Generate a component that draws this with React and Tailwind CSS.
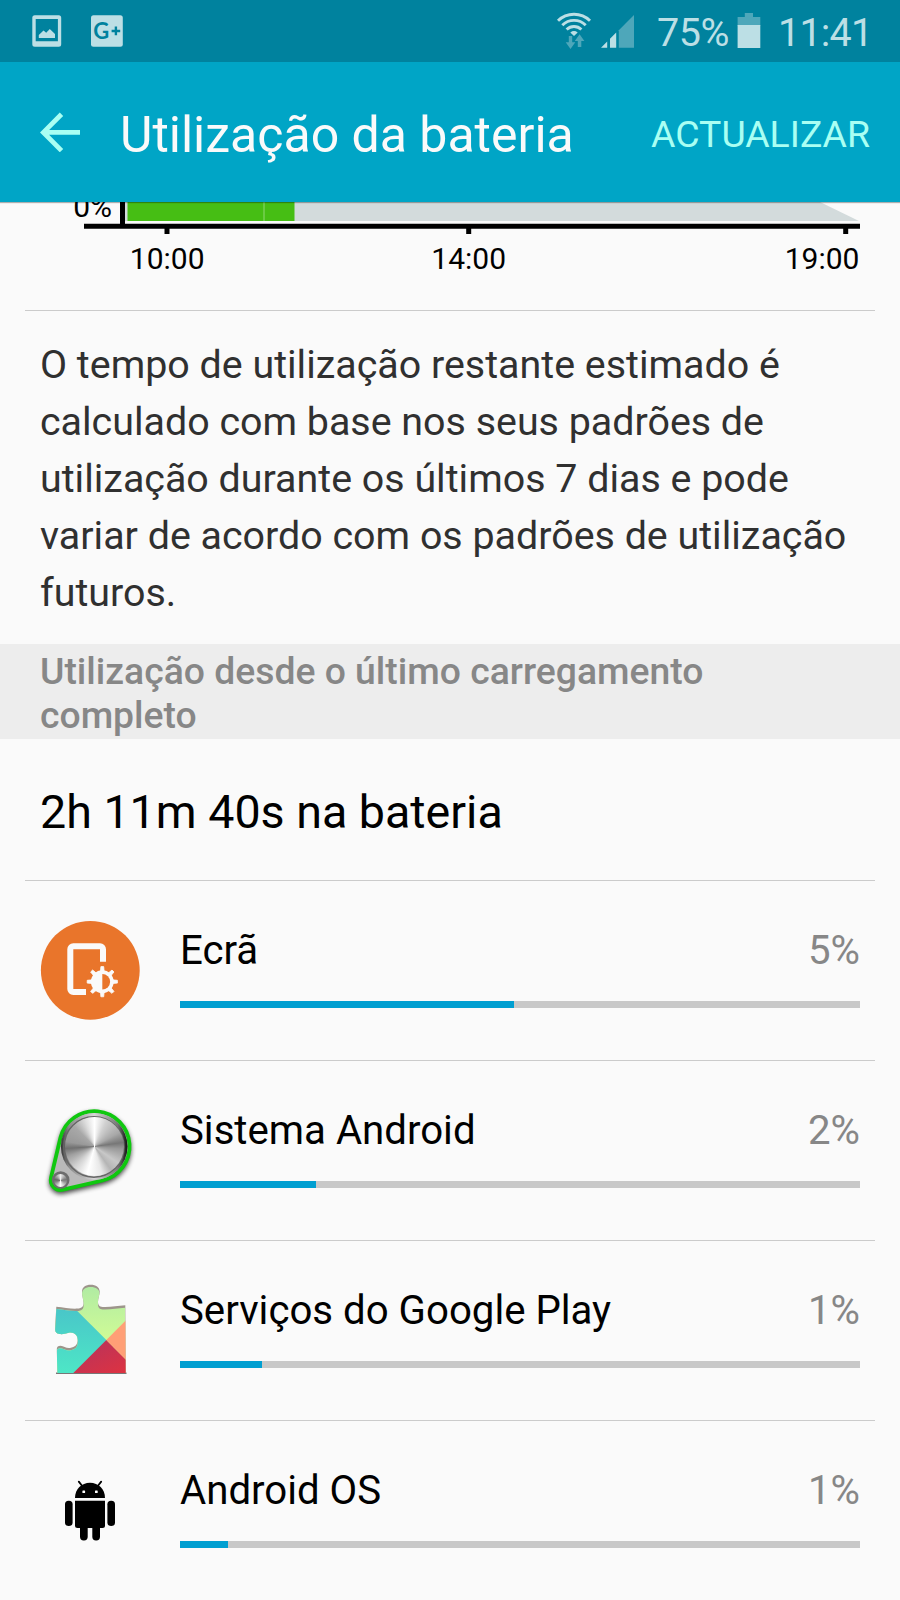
import clsx from 'clsx'

const apps = [
  { name: 'Ecrã', percent: '5%', fill: 49.1, Icon: ScreenIcon },
  { name: 'Sistema Android', percent: '2%', fill: 20, Icon: KnobIcon },
  { name: 'Serviços do Google Play', percent: '1%', fill: 12.1, Icon: PuzzleIcon },
  { name: 'Android OS', percent: '1%', fill: 7.1, Icon: RobotIcon },
]

function ScreenIcon() {
  const teeth = [0, 45, 90, 135, 180, 225, 270, 315]
  return (
    <svg className="size-[100px]" viewBox="0 0 100 100">
      <circle cx="50.3" cy="50.3" r="49.4" fill="#e9752b" />
      <path
        d="M63 41.7V29.3a3 3 0 0 0-3-3H33.3a3 3 0 0 0-3 3V69a3 3 0 0 0 3 3H46"
        fill="none"
        stroke="#fafafa"
        strokeWidth="6"
      />
      <circle cx="62.3" cy="61.7" r="15.5" fill="#e9752b" />
      {teeth.map((a) => (
        <path
          key={a}
          d="M60.4 52L60.9 46.6H63.7L64.2 52Z"
          fill="#fafafa"
          stroke="#fafafa"
          strokeWidth="0.8"
          transform={`rotate(${a} 62.3 61.7)`}
        />
      ))}
      <circle cx="62.3" cy="61.7" r="11.4" fill="#fafafa" />
      <path d="M62.3 53.9a7.8 7.8 0 0 1 0 15.6Z" fill="#e9752b" />
    </svg>
  )
}

function KnobIcon() {
  const belt = 'M11 77.6L20.5 37.5A35.1 35.1 0 1 1 62.5 80.5L23.1 89.7A10 10 0 0 1 11 77.6Z'
  return (
    <div className="relative size-[100px]">
      <svg className="absolute inset-0 size-full overflow-visible" viewBox="0 0 100 100">
        <defs>
          <filter id="knobShadow" x="-20%" y="-20%" width="140%" height="140%">
            <feGaussianBlur stdDeviation="2.6" />
          </filter>
          <linearGradient id="knobRim" x1="0" x2="1">
            <stop offset="0" stopColor="#333" />
            <stop offset="0.12" stopColor="#8a8a8a" />
            <stop offset="0.5" stopColor="#d6d6d6" />
            <stop offset="0.85" stopColor="#777" />
            <stop offset="1" stopColor="#111" />
          </linearGradient>
        </defs>
        <path d={belt} fill="#000" stroke="#000" strokeWidth="3" opacity="0.75" filter="url(#knobShadow)" transform="translate(0 2.5)" />
        <path d={belt} fill="#b9b9b9" stroke="#0fc80f" strokeWidth="3.8" />
        <circle cx="54.2" cy="46.4" r="33.3" fill="url(#knobRim)" />
        <circle cx="53.9" cy="47" r="30.2" fill="none" stroke="#666" strokeWidth="1.4" />
        <circle cx="20.7" cy="80" r="8.8" fill="#6d6d6d" />
      </svg>
      <div className="absolute left-[24.5px] top-[17px] size-[59px] rounded-full bg-[conic-gradient(#fff,#d0d0d0_25deg,#a8a8a8_60deg,#777_82deg,#999_95deg,#c8c8c8_125deg,#b5b5b5_145deg,#e8e8e8_165deg,#fff_195deg,#d0d0d0_225deg,#a0a0a0_250deg,#707070_266deg,#999_280deg,#a8a8a8_315deg,#ddd_340deg,#fff)]" />
      <div className="absolute left-[14px] top-[74px] size-[13px] rounded-full bg-[conic-gradient(#eee,#777_80deg,#999_110deg,#fff_180deg,#888_250deg,#666_280deg,#eee)]" />
    </div>
  )
}

function PuzzleIcon() {
  const piece =
    'M16.3 26.7C24 27.5 31 29 37.3 28.6C42 28.2 44 26.5 43.5 22C43 18 41.8 15 42 11.5C42.2 7 45.5 4.7 50.7 4.7S59.5 7 59.7 11.5C59.8 15 58 18 58 22C58 26 60.5 27.2 65 27C72 26.7 78 25.8 85.3 25.3L85.7 93H17.3L16.8 69C17 66.5 18 65.8 20.5 65.8C24 66 26 68.5 30 68C35 67.2 37.7 64.5 37.7 60C37.7 55 34 52 29 52.7C25 53.3 23 54.6 19.5 54C16.5 53.5 15 52 15 49Z'
  return (
    <svg className="size-[100px]" viewBox="0 0 100 100">
      <defs>
        <clipPath id="piece">
          <path d={piece} />
        </clipPath>
        <linearGradient id="teal" x1="0" y1="0" x2="0" y2="1">
          <stop offset="0.2" stopColor="#48c2c9" />
          <stop offset="1" stopColor="#4ee8c6" />
        </linearGradient>
        <linearGradient id="lime" x1="0" y1="0" x2="0" y2="1">
          <stop offset="0" stopColor="#aeeaa4" />
          <stop offset="0.6" stopColor="#cffb96" />
        </linearGradient>
        <linearGradient id="red" x1="0" y1="0" x2="1" y2="1">
          <stop offset="0.2" stopColor="#bd3358" />
          <stop offset="1" stopColor="#e3323d" />
        </linearGradient>
        <filter id="soft">
          <feGaussianBlur stdDeviation="0.7" />
        </filter>
      </defs>
      <path d="M16 92.6H86.5V93.9H16Z" fill="#777" filter="url(#soft)" />
      <path d={piece} fill="#9d958b" />
      <g clipPath="url(#piece)">
        <g clipPath="url(#piece)" transform="translate(0 2.4)">
          <path d="M8 0H90V94H8Z" fill="url(#lime)" />
          <path d="M8 -0.7L67.3 58.6L31.9 94H8Z" fill="url(#teal)" />
        </g>
        <path d="M66.3 60L100 93.7H32.6Z" fill="url(#red)" />
        <path d="M66.3 60L88 38.3V81.7Z" fill="#ff9f76" />
      </g>
    </svg>
  )
}

function RobotIcon() {
  return (
    <svg className="size-[100px]" viewBox="0 0 100 100">
      <path d="M35 38C35 29 41.5 22.7 50 22.7S65 29 65 38Z" />
      <path d="M38.8 21.6L42.2 26M61.2 21.6L57.8 26" stroke="#000" strokeWidth="1.8" strokeLinecap="round" />
      <rect x="42.4" y="30.4" width="2.7" height="2.7" rx="0.6" fill="#fff" />
      <rect x="55" y="30.4" width="2.7" height="2.7" rx="0.6" fill="#fff" />
      <path d="M35 40.7H65V65.5a2.5 2.5 0 0 1-2.5 2.5h-25a2.5 2.5 0 0 1-2.5-2.5Z" />
      <rect x="25" y="40.7" width="7.6" height="25.3" rx="3.6" />
      <rect x="67.4" y="40.7" width="7.6" height="25.3" rx="3.6" />
      <rect x="40" y="60" width="7.7" height="20.5" rx="3.7" />
      <rect x="52.3" y="60" width="7.7" height="20.5" rx="3.7" />
    </svg>
  )
}

function StatusBar() {
  return (
    <div className="flex h-[62px] items-center bg-[#00829e] text-[39.5px] text-[#bcdfe5]">
      <svg className="ml-8 h-[62px] w-24" viewBox="32 0 96 62" fill="#bcdfe5">
        <path fillRule="evenodd" d="M34.8 15.3H58.7A2.5 2.5 0 0 1 61.2 17.8V44.3A2.5 2.5 0 0 1 58.7 46.8H34.8A2.5 2.5 0 0 1 32.3 44.3V17.8A2.5 2.5 0 0 1 34.8 15.3ZM35.7 19V41.3H57.9V19Z" />
        <path d="M38.8 38V35L43.5 30.5L46.2 32.8L49.8 29L55 34V38Z" />
        <rect x="91" y="15.3" width="31.8" height="31.5" rx="2.5" />
        <text x="93.2" y="39" className="font-[Lato] text-[22px] font-bold" fill="#00829e">G</text>
        <path d="M111.6 31H120.2M115.9 26.6V35.2" stroke="#00829e" strokeWidth="2.4" />
      </svg>
      <svg className="ml-[428px] h-[62px] w-[80px]" viewBox="556 0 80 62">
        <g fill="none" stroke="#bcdfe5" strokeWidth="2.9">
          <path d="M558 20.8C566.8 12.1 581.2 12.1 590 20.8" />
          <path d="M562.3 25.2C568.8 18.8 579.2 18.8 585.7 25.2" />
          <path d="M566.6 29.5C570.8 25.5 577.2 25.5 581.4 29.5" />
        </g>
        <path d="M570.3 32.4Q574 29.6 577.7 32.4L574 36Z" fill="#bcdfe5" />
        <path d="M568.8 36H572.2V42.3H575.3L570.5 49L565.7 42.3H568.8Z" fill="#4ea7ba" />
        <path d="M577.8 47V41H574.8L579.6 34.3L584.4 41H581.3V47Z" fill="#4ea7ba" />
        <path d="M601 47.8L607.2 41.6V47.8ZM610 47.8V38.8L616.2 32.6V47.8Z" fill="#bcdfe5" />
        <path d="M618.8 47.8V30.2L634 15V47.8Z" fill="#4ea7ba" />
      </svg>
      <span className="ml-[21px] w-[80px] pt-1 tracking-[-0.4px]">75%</span>
      <svg className="h-[62px] w-6" viewBox="736.7 0 24 62">
        <path d="M744.5 13H752.7V17H760V26H737.3V17H744.5Z" fill="#4ea7ba" />
        <path d="M737.3 25H760V48H737.3Z" fill="#bcdfe5" />
      </svg>
      <span className="ml-[17px] pt-1 tracking-[-0.8px]">11:41</span>
    </div>
  )
}

function Toolbar() {
  return (
    <div className="flex h-[140px] items-center bg-[#00a5c6] pl-10 pr-[30px] shadow-[0_1px_1px_rgba(0,0,0,0.3)]">
      <svg className="h-10 w-10" viewBox="0 0 40 40" fill="none" stroke="#a9fff3" strokeWidth="4.8">
        <path d="M21.5 2.2L3.4 20.4L21.5 38.6M3 20.4H40" />
      </svg>
      <h1 className="ml-10 flex-1 pt-1.5 text-[50px] text-[#fafafa]">Utilização da bateria</h1>
      <button className="pt-1 text-[37.4px] text-[#a9fff3]">ACTUALIZAR</button>
    </div>
  )
}

function BatteryChart() {
  return (
    <svg className="block h-[108px] w-[900px] text-[30px]" viewBox="0 202 900 108">
      <text x="112" y="217" textAnchor="end">0%</text>
      <path d="M125 202H820L859 221H125Z" fill="#d3dbdc" />
      <path d="M127.5 202H294.5V221H127.5Z" fill="#46be14" />
      <path d="M264 202V221" stroke="#8fd872" />
      <path d="M122.5 202V228" stroke="#000" strokeWidth="5" />
      <path d="M84 226.3H860" stroke="#000" strokeWidth="5" />
      <path d="M167 228V234M468.7 228V234M845.7 228V234" stroke="#000" strokeWidth="5" />
      <text x="167.2" y="268.6" textAnchor="middle">10:00</text>
      <text x="468.7" y="268.6" textAnchor="middle">14:00</text>
      <text x="859.4" y="268.6" textAnchor="end">19:00</text>
    </svg>
  )
}

function UsageRow({ app, last }) {
  const { Icon } = app
  return (
    <div
      className={clsx(
        'mx-[25px] flex h-[180px] items-center border-b px-[15px] pb-px',
        last ? 'border-transparent' : 'border-[#cbcbcb]'
      )}
    >
      <Icon />
      <div className="ml-10 flex-1 pb-[11px]">
        <div className="flex h-[60px] items-center justify-between text-[40.2px]">
          <span>{app.name}</span>
          <span className="text-[#878787]">{app.percent}</span>
        </div>
        <div className="mt-[19px] h-[7px] bg-[#c8c8c8]">
          <div className="h-full bg-[#009fd1]" style={{ width: `${app.fill}%` }} />
        </div>
      </div>
    </div>
  )
}

export default function App() {
  return (
    <div className="h-[1600px] w-[900px] overflow-hidden bg-[#fafafa] font-[Roboto,sans-serif] text-black">
      <StatusBar />
      <div className="relative">
        <Toolbar />
      </div>
      <BatteryChart />
      <div className="mx-[25px] border-t border-[#cbcbcb]" />
      <p className="h-[333px] px-10 pt-[25px] text-[39.4px] leading-[57px] text-[#303030]">
        O tempo de utilização restante estimado é<br />
        calculado com base nos seus padrões de<br />
        utilização durante os últimos 7 dias e pode<br />
        variar de acordo com os padrões de utilização<br />
        futuros.
      </p>
      <h2 className="h-[95px] bg-[#ededed] px-10 pt-[5px] text-[37.3px] font-medium leading-[44px] text-[#878787]">
        Utilização desde o último carregamento<br />
        completo
      </h2>
      <div className="mx-[25px] flex h-[142px] items-center border-b border-[#cbcbcb] pl-[15px] pt-1.5 text-[46.6px]">
        2h 11m 40s na bateria
      </div>
      {apps.map((app, i) => (
        <UsageRow key={app.name} app={app} last={i === apps.length - 1} />
      ))}
    </div>
  )
}
